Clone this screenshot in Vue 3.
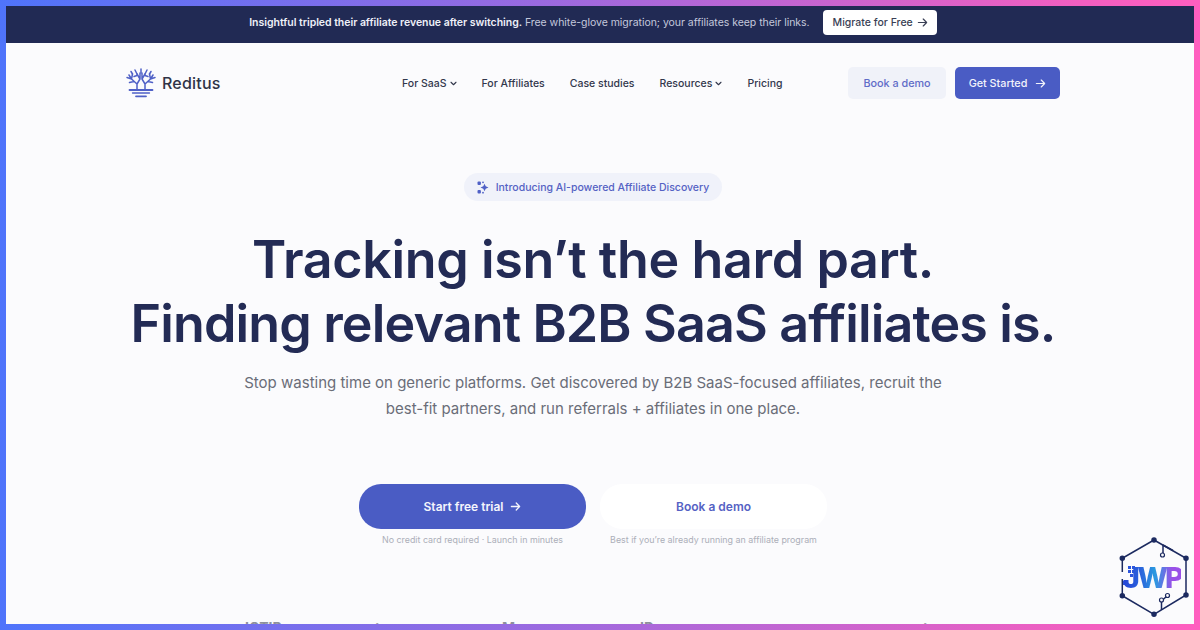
<script setup>
const navItems = [
  { label: 'For SaaS', caret: true },
  { label: 'For Affiliates', caret: false },
  { label: 'Case studies', caret: false },
  { label: 'Resources', caret: true },
  { label: 'Pricing', caret: false },
]
</script>

<template>
  <div class="frame">
    <div class="page">
      <div class="promo">
        <p class="promo-text">
          <strong>Insightful tripled their affiliate revenue after switching.</strong>
          Free white-glove migration; your affiliates keep their links.
        </p>
        <a class="promo-btn">
          Migrate for Free
          <svg width="11" height="11" viewBox="0 0 12 12" fill="none" stroke="currentColor" stroke-width="1.3" stroke-linecap="round" stroke-linejoin="round"><path d="M1.5 6h9M6.8 2.2 10.5 6l-3.7 3.8" /></svg>
        </a>
      </div>

      <header class="nav">
        <div class="logo">
          <svg width="30" height="30" viewBox="0 0 30 30" fill="none" stroke="#4f60c6" stroke-width="1.5" stroke-linecap="round">
            <!-- trunks and branches -->
            <path d="M11 22v-6L5.500 11M11 16l3-5M5.500 11 1 9.500M5.500 11 3 7M5.500 11l1-5M8 13.500 3.500 14.500M14 11l-3-5M14 11V5" />
            <path d="M19 22v-6l5.500-5M19 16l-3-5M24.500 11 29 9.500M24.500 11 27 7M24.500 11l-1-5M22 13.500l4.500 1M16 11l3-5M16 11V5" />
            <path d="M15 5V1M11 6 9 2M19 6l2-4M6.500 6 5 3.500M23.500 6 25 3.500M8 8.500l3-1M22 8.500l-3-1" />
            <!-- ground -->
            <path d="M3.500 22h23" stroke-width="1.800" />
            <path d="M6.500 25h17" stroke-width="1.300" />
            <path d="M10 28.300h10" stroke-width="1.800" />
          </svg>
          <span>Reditus</span>
        </div>
        <nav class="menu">
          <a v-for="item in navItems" :key="item.label" class="menu-item">
            {{ item.label }}
            <svg v-if="item.caret" width="7" height="5" viewBox="0 0 8 6" fill="none" stroke="currentColor" stroke-width="1.3" stroke-linecap="round" stroke-linejoin="round"><path d="M1 1.500 4 4.500l3-3" /></svg>
          </a>
        </nav>
        <div class="nav-actions">
          <a class="btn-soft">Book a demo</a>
          <a class="btn-primary">
            Get Started
            <svg width="11" height="11" viewBox="0 0 12 12" fill="none" stroke="currentColor" stroke-width="1.3" stroke-linecap="round" stroke-linejoin="round"><path d="M1.5 6h9M6.8 2.2 10.5 6l-3.7 3.8" /></svg>
          </a>
        </div>
      </header>

      <main class="hero">
        <div class="pill">
          <svg width="12" height="13" viewBox="0 0 12 13" fill="#4f60c6">
            <rect x="0.500" y="0.500" width="3.400" height="3.400" rx="1" />
            <rect x="0.500" y="9" width="3.400" height="3.400" rx="1" />
            <path d="M7.500 2.800 8.700 5.300l2.800 1.200-2.800 1.200-1.200 2.500-1.200-2.500-2.800-1.200 2.800-1.200z" />
            <circle cx="6" cy="1.300" r="0.900" />
            <circle cx="6" cy="11.700" r="0.900" />
          </svg>
          Introducing AI-powered Affiliate Discovery
        </div>
        <h1><span class="first-line">Tracking isn’t the hard part.</span><br />Finding relevant B2B SaaS affiliates is.</h1>
        <p class="lead">
          Stop wasting time on generic platforms. Get discovered by B2B SaaS-focused affiliates, recruit the<br />
          best-fit partners, and run referrals + affiliates in one place.
        </p>
        <div class="cta-row">
          <div class="cta">
            <a class="cta-main">
              Start free trial
              <svg width="11" height="11" viewBox="0 0 12 12" fill="none" stroke="currentColor" stroke-width="1.4" stroke-linecap="round" stroke-linejoin="round"><path d="M1.5 6h9M6.8 2.2 10.5 6l-3.7 3.8" /></svg>
            </a>
            <small>No credit card required · Launch in minutes</small>
          </div>
          <div class="cta">
            <a class="cta-alt">Book a demo</a>
            <small>Best if you’re already running an affiliate program</small>
          </div>
        </div>
        <!-- customer logos, almost entirely cut off by the bottom edge -->
        <div class="logos">
          <span class="l1">IOTIP</span>
          <span class="l2">t</span>
          <span class="l3">M</span>
          <span class="l4">ID</span>
          <span class="l5">t</span>
        </div>
      </main>

      <div class="badge">
        <svg width="72" height="85" viewBox="0 0 72 85" fill="none" stroke="#1c2a60" stroke-width="1.500">
          <path d="M36 5 68 23.300V60L36 79.300 4.300 60.700V44M4.300 37V23.300L36 5" />
          <path d="M45 10v9M45 10l10 5.500" />
          <path d="M43.500 66v9M43.500 66 49 61" />
          <g fill="#1c2a60">
            <circle cx="36" cy="5" r="2" />
            <circle cx="68" cy="23.300" r="2" />
            <circle cx="68" cy="60" r="2" />
            <circle cx="36" cy="79.300" r="2" />
            <circle cx="4.300" cy="60.700" r="2" />
            <circle cx="4.300" cy="23.300" r="2" />
          </g>
          <g fill="#fbfbfd" stroke-width="1.200">
            <circle cx="44.500" cy="20" r="2" />
            <circle cx="43.500" cy="65" r="2" />
            <circle cx="49.500" cy="60.500" r="2" />
          </g>
          <g fill="#2c55dc" stroke="none">
            <rect x="10" y="31" width="3" height="3" />
            <rect x="14" y="31" width="3" height="3" />
            <rect x="10" y="35" width="3" height="3" />
            <rect x="14" y="35" width="3" height="3" />
            <rect x="12" y="39" width="3" height="3" />
            <rect x="5" y="46" width="5" height="4" />
          </g>
        </svg>
        <span class="badge-text">JWP</span>
      </div>
    </div>
  </div>
</template>

<style>
html, body { margin: 0; overflow: hidden; }
</style>

<style scoped>
.frame {
  width: 1200px;
  height: 630px;
  box-sizing: border-box;
  padding: 6px;
  background: linear-gradient(90deg, #4f74fb 0%, #9a6ae0 45%, #f25fc0 90%, #ff5fbf 100%);
  font-family: Inter, "Noto Sans", sans-serif;
}

.page {
  position: relative;
  height: 618px;
  overflow: hidden;
  background: #fbfbfd;
}

.promo {
  height: 37px;
  box-sizing: border-box;
  display: flex;
  align-items: center;
  justify-content: center;
  gap: 13px;
  background: #212a54;
  color: #c4c8dc;
  font-size: 10.5px;
  padding: 0 14px 4px 0;
}

.promo-text { margin: 0; letter-spacing: -0.035px; }
.promo-text strong { color: #eef0f8; font-weight: 600; }

.promo-btn {
  display: flex;
  align-items: center;
  gap: 4px;
  height: 25px;
  padding: 0 9px 0 10px;
  box-sizing: border-box;
  background: #fff;
  color: #3a3f55;
  border-radius: 4px;
  font-weight: 500;
}

.nav {
  height: 80px;
  width: 934px;
  margin-left: 120px;
  display: flex;
  align-items: center;
}

.logo {
  display: flex;
  align-items: center;
  gap: 6px;
  color: #2f3347;
  font-size: 16px;
  font-weight: 500;
  letter-spacing: 0.2px;
  width: 276px;
}

.menu {
  display: flex;
  align-items: center;
  gap: 25px;
  font-size: 10.5px;
  font-weight: 500;
  color: #32374c;
}

.menu-item { display: flex; align-items: center; gap: 3px; }

.nav-actions {
  margin-left: auto;
  display: flex;
  gap: 9px;
  font-size: 10.8px;
  font-weight: 500;
}

.btn-soft, .btn-primary {
  height: 32px;
  display: flex;
  align-items: center;
  justify-content: center;
  border-radius: 5px;
  box-sizing: border-box;
}

.btn-soft { width: 98px; background: #f0f2f9; color: #5f6cc8; }
.btn-primary { width: 105px; gap: 8px; background: #4a5cc4; color: #f2f3fb; }

.hero {
  display: flex;
  flex-direction: column;
  align-items: center;
  padding-right: 14px;
}

.pill {
  margin-top: 50px;
  height: 28px;
  padding: 0 13px;
  display: flex;
  align-items: center;
  gap: 7px;
  border-radius: 14px;
  background: #f0f2fa;
  color: #5562c4;
  font-size: 10.5px;
  font-weight: 500;
}

h1 {
  margin: 27px 0 0;
  color: #232b55;
  font-size: 52px;
  font-weight: 600;
  line-height: 64px;
  letter-spacing: -0.85px;
  text-align: center;
}

.first-line { letter-spacing: -0.37px; }

.lead {
  margin: 14px 0 0;
  color: #6a6d78;
  font-size: 15px;
  line-height: 26px;
  text-align: center;
}

.cta-row {
  margin-top: 62px;
  display: flex;
  gap: 14px;
}

.cta {
  width: 227px;
  display: flex;
  flex-direction: column;
  align-items: center;
  gap: 5px;
}

.cta small {
  font-size: 8.9px;
  color: #acafb9;
  white-space: nowrap;
}

.cta-main, .cta-alt {
  width: 100%;
  height: 45px;
  display: flex;
  align-items: center;
  justify-content: center;
  border-radius: 22px;
  font-size: 12px;
  font-weight: 600;
}

.cta-main { gap: 7px; background: #4a5cc4; color: #f4f5fc; }
.cta-alt { background: #fff; color: #5562c4; }

.logos {
  margin-top: 76px;
  width: 696px;
  display: flex;
  color: #8d909b;
  font-size: 14px;
  line-height: 14px;
  font-weight: 700;
}

.l1 { width: 130px; }
.l2 { width: 127px; }
.l3 { width: 138px; }
.l4 { width: 283px; }

.badge {
  position: absolute;
  right: 4px;
  bottom: 4px;
  width: 72px;
  height: 85px;
  display: flex;
  align-items: center;
  justify-content: center;
}

.badge svg { position: absolute; inset: 0; }

.badge-text {
  position: relative;
  right: 2px;
  font-size: 29px;
  line-height: 30px;
  font-weight: 800;
  letter-spacing: -2.8px;
  background: linear-gradient(90deg, #2444d6 0%, #2a62dc 30%, #2a9ae0 55%, #9a50e8 85%);
  -webkit-background-clip: text;
  background-clip: text;
  color: transparent;
}
</style>
